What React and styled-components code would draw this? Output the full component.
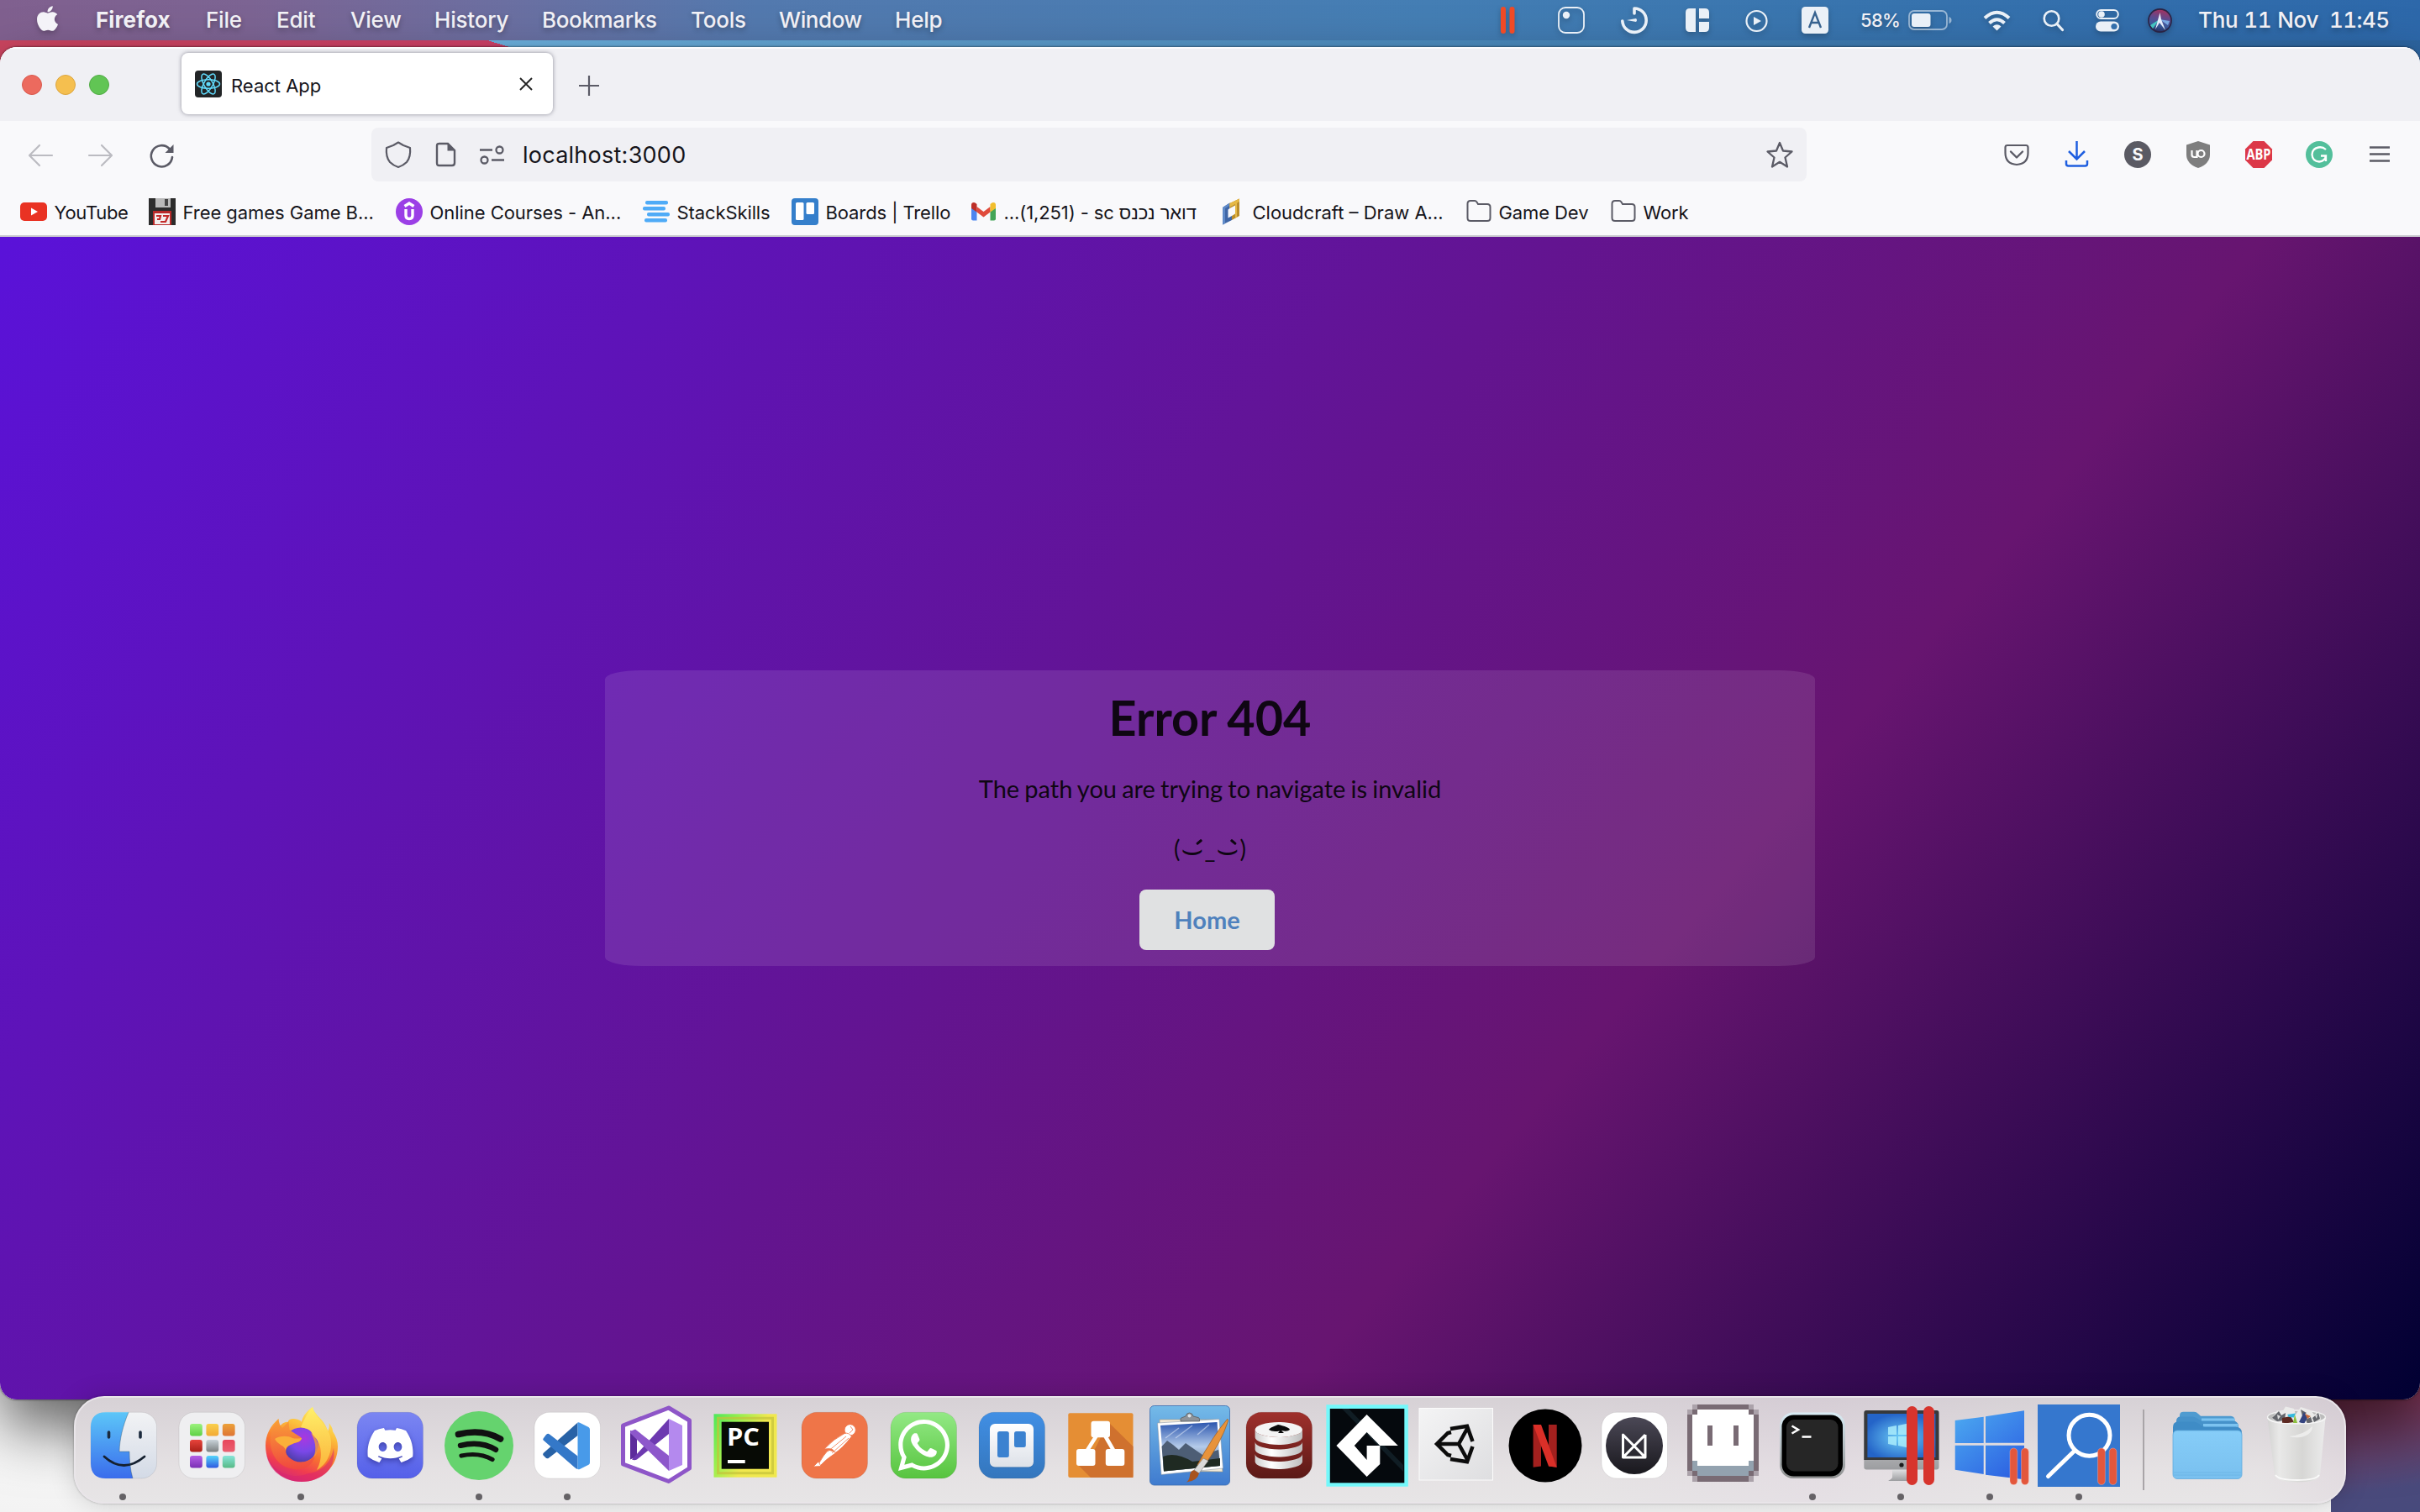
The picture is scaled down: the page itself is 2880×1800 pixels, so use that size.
import React from "react";
import styled, { createGlobalStyle } from "styled-components";
import { FaApple, FaDiscord, FaWhatsapp } from "react-icons/fa";

const GlobalStyle = createGlobalStyle`
  *, *::before, *::after { box-sizing: border-box; }
  html, body { margin: 0; padding: 0; }
  body { width: 2880px; height: 1800px; overflow: hidden; }
  svg { display: block; flex: none; overflow: visible; }
`;

const ui = `"Inter", "Liberation Sans", "DejaVu Sans", sans-serif`;
const lato = `"Lato", "DejaVu Sans", sans-serif`;

/* ---------- desktop ---------- */

const Desktop = styled.div`
  display: flex;
  flex-direction: column;
  width: 2880px;
  height: 1800px;
  overflow: hidden;
  font-family: ${ui};
  background:
    linear-gradient(#fbfbfb, #f3f3f3) 0 1640px / 2774px 160px no-repeat,
    linear-gradient(172deg, #9c3a55 0%, #85375a 35%, #4a4a7c 85%, #474a7c 100%) 2774px 1600px / 106px 200px no-repeat,
    linear-gradient(90deg, #cb4560, #cf4068) 0 40px / 580px 40px no-repeat,
    linear-gradient(to top right, #cf4068 50%, transparent 50.5%) 580px 48px / 26px 8px no-repeat,
    linear-gradient(90deg, #6cb2e0 0, #6cb2e0 600px, #62a3d2 1000px, #4787bb 1900px, #2c649f 2880px) 0 40px / 2880px 400px no-repeat,
    #3a75b0;
`;

const MenuBar = styled.header`
  display: flex;
  align-items: center;
  flex: none;
  height: 48px;
  padding-left: 42px;
  margin-bottom: 8px;
  color: #f4f3f8;
  background: linear-gradient(90deg, #80608f 0, #7c6493 300px, #6b6fa1 600px, #5379ae 900px, #447eb4 1700px, #3874ae 2200px, #2d68aa 2880px);
`;

const MenuText = styled.span`
  width: ${(p) => p.$w}px;
  font-size: ${(p) => p.$size ?? 26}px;
  line-height: 32px;
  font-weight: ${(p) => (p.$bold ? 700 : 500)};
  font-variant-numeric: ${(p) => (p.$tabular ? "tabular-nums" : "normal")};
  letter-spacing: ${(p) => p.$ls ?? -0.2}px;
  white-space: pre;
  text-shadow: 0 3px 6px rgba(0, 0, 0, 0.3);
`;

const StatusSlot = styled.div`
  display: flex;
  align-items: center;
  width: ${(p) => p.$w}px;
  height: 48px;
  filter: drop-shadow(0 3px 3px rgba(0, 0, 0, 0.22));
`;

const StatusArea = styled.div`
  display: flex;
  align-items: center;
  margin-left: auto;
`;

/* ---------- browser window ---------- */

const Browser = styled.main`
  display: flex;
  flex-direction: column;
  flex: none;
  width: 2880px;
  height: 1610px;
  border-radius: 20px;
  overflow: hidden;
  background: #f9f9fb;
`;

const BrowserShadow = styled.div`
  flex: none;
  height: 1610px;
  border-radius: 20px;
  box-shadow: 0 0 2px 1px rgba(0, 0, 0, 0.35), 0 34px 70px rgba(0, 0, 0, 0.6);
`;

const TabStrip = styled.div`
  display: flex;
  align-items: center;
  flex: none;
  height: 88px;
  padding-left: 26px;
  background: #f0f0f4;
  border-top: 2px solid #fbfbfd;
`;

const Lights = styled.div`
  display: flex;
  gap: 16px;
  width: 190px;
`;

const Light = styled.span`
  width: 24px;
  height: 24px;
  border-radius: 50%;
  background: ${(p) => p.$c};
  border: 1px solid ${(p) => p.$b};
`;

const Tab = styled.div`
  display: flex;
  align-items: center;
  width: 442px;
  height: 73px;
  margin-bottom: 3px;
  padding: 0 23px 0 16px;
  border-radius: 8px;
  background: #fff;
  box-shadow: 0 0 5px rgba(60, 60, 80, 0.55);
`;

const TabTitle = styled.span`
  flex: 1;
  padding: 4px 0 0 11px;
  font-size: 22px;
  line-height: 28px;
  letter-spacing: 0;
  color: #15141a;
`;

const NewTab = styled.div`
  display: flex;
  margin: 2px 0 0 31px;
`;

const NavBar = styled.div`
  display: flex;
  align-items: center;
  flex: none;
  height: 80px;
  padding: 0 32px;
`;

const NavButtons = styled.div`
  display: flex;
  align-items: center;
  gap: 40px;
  width: 410px;
`;

const UrlBar = styled.div`
  display: flex;
  align-items: center;
  width: 1708px;
  height: 64px;
  padding: 0 16px;
  border-radius: 8px;
  background: #f0f0f4;
`;

const Url = styled.span`
  flex: 1;
  padding: 2px 0 0 22px;
  font-size: 27px;
  line-height: 34px;
  letter-spacing: 0.25px;
  color: #15141a;
`;

const UrlIcon = styled.span`
  display: flex;
  width: ${(p) => p.$w}px;
`;

const Extensions = styled.div`
  display: flex;
  align-items: center;
  gap: 40px;
  margin-left: auto;
`;

const Bookmarks = styled.nav`
  display: flex;
  align-items: flex-start;
  flex: none;
  height: 58px;
  padding: 12px 0 0 24px;
  border-bottom: 2px solid #c9c9cf;
`;

const Bookmark = styled.div`
  display: flex;
  align-items: center;
  width: ${(p) => p.$w}px;
  height: 32px;
  gap: 8.5px;
  font-size: 22px;
  line-height: 30px;
  letter-spacing: ${(p) => p.$ls}px;
  white-space: nowrap;
  color: #15141a;

  span { padding-top: 2px; }
`;

/* ---------- page ---------- */

const Page = styled.section`
  display: flex;
  justify-content: center;
  align-items: center;
  flex: 1;
  background: linear-gradient(130deg, #5a12d9 0%, #671570 66.7%, #000032 100%);
`;

const Card = styled.article`
  display: flex;
  flex-direction: column;
  align-items: center;
  width: 1440px;
  height: 352px;
  border-radius: 3%;
  background: rgba(255, 255, 255, 0.1);
  font-family: ${lato};
  color: #0f0613;
`;

const Title = styled.h1`
  margin: 20px 0 0;
  font-size: 57.5px;
  line-height: 72px;
  font-weight: 700;
  word-spacing: -1px;
`;

const Message = styled.p`
  margin: 29px 0 0;
  font-size: 29px;
  line-height: 40px;
  word-spacing: -1.25px;
`;

const Face = styled.p`
  display: flex;
  justify-content: center;
  margin: 31px 0 0;
  font-size: 28px;
  line-height: 40px;
`;

const Eye = styled.span`
  position: relative;
  display: flex;
  justify-content: center;
  width: 29px;
  font: 42px/40px "DejaVu Sans", sans-serif;
  transform: translateY(1px);

  &::after {
    content: "";
    position: absolute;
    top: 10px;
    left: 18px;
    width: 8px;
    height: 2.5px;
    border-radius: 1px;
    background: currentColor;
    transform: rotate(${(p) => p.$tilt}deg);
  }
`;

const Mouth = styled.span`
  padding-top: 1px;
`;

const HomeButton = styled.button`
  margin: 28px 7px 0 0;
  width: 161px;
  height: 72px;
  border: 0;
  border-radius: 8px;
  background: #e0e1e2;
  color: #4f81bd;
  font: 700 29px/28px ${lato};
`;

/* ---------- dock ---------- */

const DockBar = styled.footer`
  position: relative;
  display: flex;
  flex: none;
  width: 2704px;
  height: 128px;
  margin: -4px 0 0 88px;
  padding: 4px 0 0 3.6px;
  border: 2px solid #e9e5e9;
  border-radius: 36px;
  background:
    linear-gradient(180deg, rgba(214, 208, 213, 0.9), rgba(230, 226, 228, 0.9) 70%, rgba(232, 230, 231, 0.9)),
    linear-gradient(90deg, #dcdcdc 0 1800px, #c9a9cf 2060px, #dcdcdc 2300px, #e0e0e0 2600px, #b993b5 2704px);
  box-shadow: 0 0 2px 1px rgba(0, 0, 0, 0.14), 0 0 30px rgba(0, 0, 0, 0.16);
`;

const DockSlot = styled.div`
  display: flex;
  flex-direction: column;
  align-items: center;
  width: 105.8px;
`;

const RunningDot = styled.i`
  width: 8px;
  height: 8px;
  border-radius: 50%;
  background: #656266;
`;

const Divider = styled.div`
  width: 2px;
  height: 96px;
  margin: 10px 22px 0 23px;
  background: #a9a5a8;
`;

/* ---------- dock artwork (each on a 106 x 110 board) ---------- */

const Tile = ({ fill }) => <rect x="14" y="13.3" width="78.5" height="78.7" rx="18" fill={fill} stroke="rgba(0,0,0,.08)" />;

const Grad = ({ id, from, to, x2 = 0, y2 = 1 }) => (
  <linearGradient id={id} x1="0" y1="0" x2={x2} y2={y2}>
    <stop offset="0" stopColor={from} />
    <stop offset="1" stopColor={to} />
  </linearGradient>
);

const Finder = () => (
  <>
    <Grad id="fi" from="#5cc6f8" to="#3a6cec" />
    <Grad id="fj" from="#f2f3f5" to="#d3dae6" />
    <Tile fill="url(#fj)" />
    <path d="M32 13.3H59C52 30 48.5 45 48 60H60C60 70 61 82 64 92H32Q14 92 14 74V31Q14 13.3 32 13.3Z" fill="url(#fi)" />
    <path d="M35.5 37V43M73 37V43" stroke="#1b2a3d" strokeWidth="3.6" strokeLinecap="round" />
    <path d="M30 66Q53 87 78 66" fill="none" stroke="#15202f" strokeWidth="2.8" strokeLinecap="round" />
    <path d="M59 13.3C52 30 48.5 45 48 60H60C60 70 61 82 64 92" fill="none" stroke="#356" strokeWidth=".8" opacity=".5" />
  </>
);

const cells = [
  ["#9cf27e", "#5fd045"], ["#f9d04e", "#f2a934"], ["#eca13a", "#de7434"],
  ["#e8443c", "#a81f17"], ["#c9d3d9", "#7a7f80"], ["#e8465c", "#ea5f70"],
  ["#b45fe6", "#7a2fb4"], ["#55d5fb", "#2e58e0"], ["#86e5d9", "#57b985"],
];
const Launchpad = () => (
  <>
    <Tile fill="#efeff1" />
    {cells.map(([a, b], i) => (
      <React.Fragment key={a}>
        <Grad id={`lp${i}`} from={a} to={b} />
        <rect x={27 + (i % 3) * 19.4} y={27 + Math.floor(i / 3) * 19} width="14.8" height="14.6" rx="3" fill={`url(#lp${i})`} />
      </React.Fragment>
    ))}
  </>
);

const Firefox = () => (
  <>
    <linearGradient id="fx" x1=".75" y1="0" x2=".35" y2="1">
      <stop offset="0" stopColor="#fff36b" />
      <stop offset=".3" stopColor="#fcc03c" />
      <stop offset=".6" stopColor="#f8752f" />
      <stop offset=".82" stopColor="#f03c4f" />
      <stop offset="1" stopColor="#d22a78" />
    </linearGradient>
    <radialGradient id="fg" cx=".6" cy=".3" r=".8">
      <stop offset="0" stopColor="#a838e0" />
      <stop offset=".5" stopColor="#7a48e8" />
      <stop offset="1" stopColor="#433b9b" />
    </radialGradient>
    <Grad id="fh" from="#f9a136" to="#f0473f" />
    <Grad id="fk" from="#fff06a" to="#fbb33a" />
    <path d="M26.5 21C25 26 26 29 27 31C31 26 35 24 38 25C37 18 60 20 54 31C52 20 60 12 67 7C69 17 82 22 85 36C87 33 87 29 86.6 26C90 31 91 33 91 36C95 42 97 48 97 54C97 78 78 96 54 96C30 96 11 78 11 53C11 40 17 29 26.5 21Z" fill="url(#fx)" />
    <path d="M12 62C18 86 44 94 62 86C80 84 90 70 92 56C96 84 74 96 54 96C32 96 14 82 12 62Z" fill="#d8256f" opacity=".55" />
    <circle cx="53" cy="52" r="20.5" fill="url(#fg)" />
    <path d="M53 31C58 20 62 12 67 7C69 19 84 26 88 42C92 60 84 76 72 82C80 68 78 48 68 42C66 38 66 33 53 31Z" fill="url(#fk)" />
    <path d="M65 38C74 44 78 60 66 70C72 62 72 50 65 38Z" fill="#f9963a" opacity=".8" />
    <path d="M26.5 21C27 26 28 29 31 32L38.5 24L39.5 34C44 38 48 39 54 44C53 49 47 49 43 51C36 53 34 58 36 64C38 71 45 74 53 73C59 73 66 70 70 65C66 80 52 84 40 80C24 76 15 60 17 42C18 34 21 27 26.5 21Z" fill="url(#fh)" />
    <path d="M22 45C28 41 38 41 43 44Q48 45 54 44C53 49 47 49 43 51C38 53 35 55 35 59C34 52 26 53 22 45Z" fill="#fbb03a" />
  </>
);

const Discord = () => (
  <>
    <Grad id="dc" from="#7b86f2" to="#5560e9" />
    <Tile fill="url(#dc)" />
    <g style={{ filter: "drop-shadow(0 3px 3px rgba(40,40,140,.6))" }}>
      <FaDiscord x="24" y="29" width="59" height="47" color="#fff" style={{ width: 59, height: 47 }} />
    </g>
  </>
);

const Spotify = () => (
  <g>
    <circle cx="53" cy="53" r="41" fill="#65d36e" />
    <g fill="none" stroke="#111" strokeLinecap="round">
      <path d="M28.5 39.5Q57 32.5 78.5 45" strokeWidth="7.6" />
      <path d="M31 52.8Q55 47 73 57.8" strokeWidth="6.4" />
      <path d="M32 65Q53 60.5 69 69.5" strokeWidth="5.2" />
    </g>
  </g>
);

const VSCode = () => (
  <>
    <Tile fill="#fff" />
    <path d="M24.6 62L65.5 25.5V41L31 67.7Q29 69 27 67L24.6 64.5Q23.6 63 24.6 62Z" fill="#2862a6" />
    <path d="M24.6 44.5L27.5 40.5Q29.5 37.8 32 39.5L65.5 65.5V81Q64 81 62 79L24.6 46.5Q23.8 45.5 24.6 44.5Z" fill="#3478c8" />
    <path d="M65.5 25.5Q66.5 25 68 25.8L78.5 31Q80 32 80 34V73Q80 75 78.5 75.8L68 81Q66.5 81.5 65.5 81Z" fill="#489ae9" />
  </>
);

const VisualStudio = () => (
  <g>
    <path d="M67.8 8L92.5 23V80L67.8 95.5L13.5 75V29Z" fill="#fff" stroke="#8e56c8" strokeWidth="5" strokeLinejoin="round" />
    <path d="M22 35L30 38V66L22 69.5Z" fill="#5d2c9c" />
    <path d="M24 69.5L68 21V39L30 69.5Q27 71 24 69.5Z" fill="#6d39b0" />
    <path d="M22 36L28 33.5L68 65V83L22 38Z" fill="#8d57cb" />
    <path d="M68 21L84 29V76L68 83Z" fill="#b489ee" />
  </g>
);

const PyCharm = () => (
  <>
    <linearGradient id="pc" x1="0" y1="0" x2="1" y2=".5">
      <stop offset="0" stopColor="#4be85a" />
      <stop offset=".35" stopColor="#9af04e" />
      <stop offset=".7" stopColor="#f0e84e" />
    </linearGradient>
    <rect x="15.5" y="15.3" width="75" height="75.4" fill="url(#pc)" />
    <rect x="20.5" y="20.3" width="65" height="65.4" fill="none" stroke="#c3c23a" strokeWidth="3" opacity=".7" />
    <rect x="24.7" y="24.7" width="56.3" height="56" fill="#070a05" />
    <text x="31" y="53" fontFamily="Open Sans, sans-serif" fontWeight="700" fontSize="28.5" textLength="39" lengthAdjust="spacingAndGlyphs" fill="#fff">PC</text>
    <rect x="32" y="70" width="20.7" height="4" fill="#fff" />
  </>
);

const Postman = () => (
  <>
    <Tile fill="#ef7548" />
    <g fill="#fff" stroke="#ef7548" strokeWidth=".8">
      <circle cx="71.7" cy="34.3" r="6.6" />
      <path d="M72 30L75 34L71 38" fill="none" />
      <path d="M65 38.5Q70 37 73.5 42Q62 57 52 63Q55 55 41 57Q52 45 65 38.5Z" />
      <path d="M52 60Q55 60 54 62Q42 70 36 77L34 75Q40 64 46 58Z" />
      <path d="M34 72L37 77.5L28 78Z" />
      <path d="M67 42L45 60M70 44L50 62" fill="none" />
    </g>
  </>
);

const WhatsApp = () => (
  <>
    <Grad id="wa" from="#93e985" to="#57c43f" />
    <Tile fill="url(#wa)" />
    <FaWhatsapp x="23" y="17.5" color="#fff" style={{ width: 61, height: 70 }} width="61" height="70" />
  </>
);

const Trello = () => (
  <>
    <Grad id="tr" from="#418fe4" to="#3476bd" />
    <Grad id="ts" from="#ffffff" to="#dde1e8" />
    <Tile fill="url(#tr)" />
    <rect x="27" y="27.5" width="52" height="52" rx="6" fill="#1d4f8a" opacity=".35" />
    <rect x="27" y="27" width="52" height="51.5" rx="6" fill="url(#ts)" />
    <rect x="36" y="36" width="13.8" height="31" rx="2.5" fill="#3b82d0" />
    <rect x="56" y="36" width="13.8" height="19" rx="2.5" fill="#3b82d0" />
  </>
);

const DrawIo = () => (
  <>
    <rect x="14.3" y="14.3" width="77.2" height="76.7" rx="2" fill="#e58e34" />
    <path d="M62 25L91.5 54V91H41L26 76L46 57L53 43Z" fill="#cf712e" />
    <path d="M48 41L36 60M58 41L69 60" stroke="#fff" strokeWidth="4.5" />
    <rect x="41.5" y="23.7" width="22.5" height="19.5" rx="3" fill="#fff" />
    <rect x="24" y="57" width="22.5" height="20" rx="3" fill="#fff" />
    <rect x="58.8" y="57" width="22.5" height="20" rx="3" fill="#fff" />
  </>
);

const PhotoEditor = () => (
  <>
    <Grad id="pe" from="#74bae8" to="#3f7bcf" />
    <linearGradient id="ps" x1="0" y1="0" x2="0" y2="1">
      <stop offset="0" stopColor="#2b55ae" />
      <stop offset=".5" stopColor="#b4cbea" />
      <stop offset="1" stopColor="#5d6f80" />
    </linearGradient>
    <rect x="5.5" y="5.5" width="95" height="94.5" rx="5" fill="url(#pe)" stroke="#3a6cb0" strokeWidth=".8" />
    <path d="M17 22H87L92 84L19 83Z" fill="#f3ead8" stroke="#a89878" strokeWidth=".6" />
    <path d="M14.5 26L88 21.5L92.5 80L19 87.5Z" fill="#fff" stroke="#8d99a8" strokeWidth=".6" />
    <path d="M18 29L85.5 25L89 77L22 83.5Z" fill="url(#ps)" />
    <path d="M19.5 54L26 47L33 52L40 58L48 50L58 57L68 64L87 58L89 77L22 83.5Z" fill="#4d5e75" />
    <path d="M21 66Q36 60 56 72L89 68V77L22 83.5Z" fill="#1f2a22" />
    <path d="M24 44L40 32M36 44L56 29M62 40L76 28" stroke="#e9f1fc" strokeWidth="1.4" opacity=".5" />
    <path d="M42 24V21Q42 20 44 19.5L48 18Q49 14 52.5 14Q56 14 57 18L63 19.5Q64.5 20 64.5 21.5V24Z" fill="#8d9299" stroke="#555" strokeWidth=".7" />
    <circle cx="52.5" cy="17.5" r="2" fill="#dfe5ea" />
    <path d="M97.5 21.5Q99 21 98.5 24Q90 50 68 80L62 76Q80 42 97.5 21.5Z" fill="#e8933a" stroke="#9c5a1c" strokeWidth=".7" />
    <path d="M69 68L75 71L64 86L58 82Z" fill="#d9d9d9" stroke="#777" strokeWidth=".6" />
    <path d="M58 82L64 86Q62 95 49 96.5Q53 93 53 88Q54 83 58 82Z" fill="#a8541f" />
  </>
);

const Database = () => (
  <>
    <Grad id="db" from="#9f302c" to="#5b1916" />
    <linearGradient id="dd" x1="0" y1="0" x2="1" y2="0">
      <stop offset="0" stopColor="#cfcfcf" />
      <stop offset=".35" stopColor="#ffffff" />
      <stop offset="1" stopColor="#bdbdbd" />
    </linearGradient>
    <Tile fill="url(#db)" />
    {[29, 14.5, 0].map((dy) => (
      <path key={dy} d={`M24.6 ${34 + dy}V${43 + dy}A28.2 9 0 0 0 81 ${43 + dy}V${34 + dy}A28.2 9 0 0 1 24.6 ${34 + dy}Z`} fill="url(#dd)" />
    ))}
    <ellipse cx="52.8" cy="34" rx="28.2" ry="9" fill="#f4f4f4" />
    <path d="M52 28Q66 31 66 34Q63 37 56 35L59 38H52L54 35.5Q45 37 41 34Q41 32 52 28Z" fill="#0a0a0a" />
  </>
);

const GameMaker = () => (
  <>
    <rect x="3.4" y="4.3" width="97.4" height="97.4" fill="#74f8fb" />
    <rect x="7.8" y="9" width="88.5" height="88.3" fill="#05090d" />
    <path d="M22 9L95 84V76L30 9Z" fill="#101d24" />
    <path d="M51.6 16L88.8 53H67.3L51.6 37L36.8 53L51.6 70V53H67.3V75L51.6 90L15.4 53Z" fill="#fff" />
  </>
);

const Unity = () => (
  <>
    <Grad id="un" from="#f4f4f5" to="#dedee0" x2={1} />
    <rect x="9" y="8.5" width="87.5" height="85.5" fill="url(#un)" stroke="#fbfbfb" />
    <g fill="none" stroke="#0c0c0c" strokeWidth="4.5">
      <path d="M46 33L66 29.8L72.5 48M46 69L66 72.2L72.5 54M56 51H31M56 51L67 31M56 51L67 71" />
      <path d="M47 37L43 38L30 51L43 64L47 65" />
    </g>
  </>
);

const Netflix = () => (
  <>
    <circle cx="53" cy="53" r="43.5" fill="#000" />
    <path d="M38.6 28H48V77.6L38.6 78.7ZM57 28H66.7V78.7L57 77.6Z" fill="#a3201e" />
    <path d="M38.6 28H48L66.7 78.7L57 77.6Z" fill="#db2f28" />
  </>
);

const Monogram = () => (
  <>
    <Grad id="mg" from="#4b4856" to="#19181d" />
    <Tile fill="#fff" />
    <circle cx="53" cy="53" r="34" fill="url(#mg)" />
    <path d="M39.5 67V40L66 67M66 40L39.5 67H66V40" fill="none" stroke="#fff" strokeWidth="3" strokeLinejoin="round" />
  </>
);

const Aseprite = () => (
  <g shapeRendering="crispEdges">
    <path d="M16 4H89V10H95V89H89V96H16V89H10V10H16Z" fill="#aba2aa" />
    <path d="M22 4H83V10H89V16H95V83H89V89H83V96H22V89H16V83H10V16H16V10H22Z" fill="#796b74" />
    <path d="M22 10H83V16H89V77H16V16H22Z" fill="#fff" />
    <path d="M16 71H22V77H83V71H89V83H83V89H22V83H16Z" fill="#93a2af" />
    <path d="M34 29H40V53H34ZM65 29H71V53H65Z" fill="#796b74" />
  </g>
);

const Terminal = () => (
  <>
    <Grad id="te" from="#d9ecf5" to="#8f9090" />
    <rect x="14" y="13.5" width="78" height="78.5" rx="16" fill="url(#te)" />
    <rect x="16.5" y="16.5" width="72.5" height="73" rx="14" fill="#000" />
    <rect x="22" y="22" width="61.5" height="61.5" rx="9" fill="#262626" />
    <path d="M28.5 29.5L36 34L28.5 38.5" fill="none" stroke="#fff" strokeWidth="2.6" />
    <path d="M40.5 42.5H51.5" stroke="#fff" strokeWidth="2.6" />
  </>
);

const ParallelsBars = ({ x1 = 76, x2 = 90, fill = "#e3573c" }) => (
  <g fill={fill} stroke="rgba(255,190,180,.45)" strokeWidth=".8">
    <rect x={x1} y="56" width="8.8" height="43.5" rx="4.4" />
    <rect x={x2} y="56" width="8.8" height="43.5" rx="4.4" />
  </g>
);

const VirtualMac = () => (
  <>
    <radialGradient id="vr" cx=".5" cy=".55" r=".55">
      <stop offset="0" stopColor="#6fd0f8" />
      <stop offset="1" stopColor="#2464c8" />
    </radialGradient>
    <Grad id="vs" from="#e2e2e4" to="#9c9da0" />
    <path d="M43 81H63L64 91Q66 94 68 95H38Q42 93 43 91Z" fill="url(#vs)" />
    <rect x="9.3" y="11" width="89.2" height="70.5" rx="3" fill="url(#vs)" />
    <path d="M12 11H96Q98.5 11 98.5 14V70H9.3V14Q9.3 11 12 11Z" fill="#37393c" />
    <rect x="13.4" y="15" width="81" height="52" fill="url(#vr)" />
    <path d="M38 31L48 29V40H38ZM50 29L64 26V40H50ZM38 42H48V53L38 51ZM50 42H64V56L50 53Z" fill="#a9ecfb" opacity=".85" />
    <circle cx="54" cy="76" r="2.6" fill="#1c1c1c" />
    <g fill="#d7342d">
      <rect x="60" y="6" width="13" height="94" rx="6.5" />
      <rect x="80" y="6" width="13" height="94" rx="6.5" />
    </g>
  </>
);

const Windows = () => (
  <>
    <linearGradient id="wi" gradientUnits="userSpaceOnUse" x1="20" y1="15" x2="80" y2="90">
      <stop offset="0" stopColor="#4aa5f0" />
      <stop offset="1" stopColor="#2d62e2" />
    </linearGradient>
    <path d="M11.7 23L45.7 18.7V50H11.7ZM48 18.2L94 11.3V49.7H48ZM11.7 52.7H45.7V87L11.7 81.7ZM48 52.7H94V93.3L48 87.7Z" fill="url(#wi)" />
    <ParallelsBars x1={77} x2={90.5} />
  </>
);

const SearchApp = () => (
  <>
    <rect x="4" y="4" width="98" height="98" fill="#3577ce" />
    <circle cx="65.5" cy="40.7" r="24.5" fill="none" stroke="#fff" strokeWidth="5" />
    <path d="M48 59L16.5 89.5" stroke="#fff" strokeWidth="5" strokeLinecap="round" />
    <ParallelsBars x1={75.5} x2={89.2} />
  </>
);

const Folders = () => (
  <>
    <Grad id="fo" from="#86cdf8" to="#79c0ef" />
    <path d="M20 36V17Q20 12.7 24.5 12.7H37Q40 12.7 42 15L45 17.7H81Q85 18 85.5 22V36Z" fill="#4f9bd0" />
    <path d="M46 20.5H85.5V28H46Z" fill="#7cc3f0" />
    <path d="M16 40V24Q16 18.5 21 18.5H36Q40 19 43 22L46 23.5H84Q89 24 90 29V40Z" fill="#4692ca" />
    <path d="M48 27H89.5V34H48Z" fill="#7cc3f0" />
    <path d="M12 60V31Q12 24.5 18 24.5H36Q40 24.5 43 27Q46 30.5 50 30.5H87Q94 31 94 38V60Z" fill="#3f8cc6" />
    <rect x="12" y="35" width="82" height="57.5" rx="5" fill="url(#fo)" stroke="#62abdd" strokeWidth=".8" />
    <path d="M13 85H93M13 88H93" stroke="#6cb4e4" strokeWidth=".9" />
  </>
);

const Trash = () => (
  <>
    <linearGradient id="ta" x1="0" y1="0" x2="1" y2="0">
      <stop offset="0" stopColor="#d2d2d1" />
      <stop offset=".2" stopColor="#e9e9e8" />
      <stop offset=".6" stopColor="#d6d6d4" />
      <stop offset="1" stopColor="#ececec" />
    </linearGradient>
    <ellipse cx="53" cy="19" rx="34.5" ry="8" fill="#bcbcbc" stroke="#f2f2f2" strokeWidth="1.4" />
    <path d="M24 21L30 11L36 13L40 6.5L50 9L52 16L58 7L70 11L74 16L80 12L82 22L66 27H38Z" fill="#ebebea" />
    <path d="M24 20L32 12L35 17L40 14L39 23L30 24ZM58 10L65 14L60 18ZM72 20L79 14L81 21L74 25ZM64 22L70 19L72 25L66 27Z" fill="#63656b" />
    <path d="M30 16L34 18L31 22ZM75 17L78 16L77 21Z" fill="#dedede" />
    <path d="M36 20L46 18L50 25L36 27Z" fill="#5d2a22" />
    <path d="M42 16L52 14.5L50 19.5L44 19Z" fill="#35b8dd" />
    <path d="M51 16L54 26L49 26Z" fill="#8cbf3d" />
    <path d="M56 25L62 13L66 20L62 27Z" fill="#34447f" />
    <path d="M63 15L70 18L66 21Z" fill="#c96a38" />
    <path d="M18.5 20Q21 27 53 27Q85 27 87.5 20L81 88Q79 96.5 54 96.5Q29 96.5 27 88Z" fill="url(#ta)" opacity=".96" />
    <path d="M44 42Q62 40 72 30Q72 40 58 43Q50 44 44 42Z" fill="#f1f1f0" opacity=".8" />
    <path d="M28 88Q32 94 54 94Q76 94 80 88" fill="none" stroke="#fff" strokeWidth="2" opacity=".8" />
    <path d="M18.5 20Q21 27 53 27Q85 27 87.5 20" fill="none" stroke="#f7f7f7" strokeWidth="1.2" />
  </>
);

const apps = [
  [Finder, 1], [Launchpad], [Firefox, 1], [Discord], [Spotify, 1], [VSCode, 1], [VisualStudio], [PyCharm],
  [Postman], [WhatsApp], [Trello], [DrawIo], [PhotoEditor], [Database], [GameMaker], [Unity], [Netflix],
  [Monogram], [Aseprite], [Terminal, 1], [VirtualMac, 1], [Windows, 1], [SearchApp, 1],
];

const DockItem = ({ art: Art, running }) => (
  <DockSlot>
    <svg width="106" height="110" viewBox="0 0 106 110"><Art /></svg>
    {running ? <RunningDot /> : null}
  </DockSlot>
);

/* ---------- small icons ---------- */

const Glyph = ({ w = 32, h = 32, children, ...rest }) => (
  <svg width={w} height={h} viewBox={`0 0 ${w} ${h}`} fill="none" {...rest}>{children}</svg>
);

const white = "#eaf0f7";

const StatusIcons = () => (
  <StatusArea>
    <StatusSlot $w={68}><Glyph w={17} fill="#f04a25"><rect width="6" height="32" rx="3" /><rect x="10.5" width="6" height="32" rx="3" /></Glyph></StatusSlot>
    <StatusSlot $w={75}><Glyph><rect x="1" y="1" width="30" height="30" rx="8" stroke={white} strokeWidth="1.8" /><circle cx="10" cy="10" r="4.2" fill={white} /></Glyph></StatusSlot>
    <StatusSlot $w={77}><Glyph>
      <path d="M16 8V2A14.2 14.2 0 1 1 1.8 17" stroke={white} strokeWidth="3.6" strokeLinejoin="round" strokeLinecap="round" />
      <path d="M7 16L18 14Q20 16 18 18Z" fill={white} />
    </Glyph></StatusSlot>
    <StatusSlot $w={71}><Glyph w={28} h={28} fill={white}><path d="M5 0H12V28H5Q0 28 0 23V5Q0 0 5 0ZM16 0H23Q28 0 28 5V12H16ZM16 16H28V23Q28 28 23 28H16Z" /></Glyph></StatusSlot>
    <StatusSlot $w={67}><Glyph w={27} h={27}><circle cx="13.5" cy="14" r="12" stroke={white} strokeWidth="2.2" /><path d="M10 9L19 14L10 19Z" fill={white} /></Glyph></StatusSlot>
    <StatusSlot $w={70}><Glyph>
      <rect width="32" height="32" rx="4.5" fill={white} />
      <path d="M9 25L16 7L23 25M11.5 19H20.5" stroke="#37628f" strokeWidth="2.4" />
    </Glyph></StatusSlot>
    <MenuText $w={57} $ls={-0.7} $size={22}>58%</MenuText>
    <StatusSlot $w={89}><Glyph w={52} h={24}>
      <rect x="1" y="1" width="45" height="22" rx="6" stroke={white} strokeOpacity=".55" strokeWidth="1.8" />
      <rect x="4" y="4" width="22.5" height="16" rx="3" fill={white} />
      <path d="M48.5 8Q51.5 9 51.5 12Q51.5 15 48.5 16Z" fill={white} opacity=".55" />
    </Glyph></StatusSlot>
    <StatusSlot $w={71}><Glyph w={33} h={25}>
      <path d="M2 9.5Q16.5 -4 31 9.5" stroke={white} strokeWidth="4" />
      <path d="M7.5 15.5Q16.5 7 25.5 15.5" stroke={white} strokeWidth="4" />
      <path d="M16.5 24.5L11.5 19.5Q16.5 15 21.5 19.5Z" fill={white} />
    </Glyph></StatusSlot>
    <StatusSlot $w={63}><Glyph w={25} h={26}><circle cx="10.5" cy="11" r="8.8" stroke={white} strokeWidth="2.6" /><path d="M17 17.5L23.5 24.5" stroke={white} strokeWidth="3.2" strokeLinecap="round" /></Glyph></StatusSlot>
    <StatusSlot $w={62}><Glyph w={28} h={28}>
      <rect x="1.2" y="2" width="25.6" height="10" rx="5" stroke={white} strokeWidth="2" /><circle cx="7" cy="7" r="3.8" fill={white} />
      <rect y="15.5" width="28" height="12" rx="6" fill={white} /><circle cx="22" cy="21.5" r="3.6" fill="#346fab" />
    </Glyph></StatusSlot>
    <StatusSlot $w={60}><Glyph w={29} h={29}>
      <linearGradient id="siri" x1=".6" y1="0" x2=".4" y2="1">
        <stop offset="0" stopColor="#a8305c" /><stop offset=".4" stopColor="#5d4a8e" /><stop offset=".7" stopColor="#3a5a9c" /><stop offset="1" stopColor="#232d5c" />
      </linearGradient>
      <circle cx="14.5" cy="14.5" r="13.6" fill="url(#siri)" stroke="#2a2344" strokeWidth="1.6" />
      <path d="M14 13L3 20L6 24Z" fill="#46d8c8" opacity=".85" />
      <path d="M14 13L26 15L24 20Z" fill="#7fb6ee" opacity=".85" />
      <path d="M14.5 5L16 13L21 26L14 17L9 25L12 14Z" fill="#eef6ff" opacity=".95" />
    </Glyph></StatusSlot>
    <MenuText $w={156} $ls={-0.25} $tabular>Thu 11 Nov</MenuText>
    <MenuText $w={108} $ls={-0.55} $tabular>11:45</MenuText>
  </StatusArea>
);

const ink = "#5b5b66";

const FolderIcon = () => (
  <Glyph w={30} h={28} style={{ marginBottom: 2 }}><path d="M5 2H10Q11.5 2 12.5 3.5L14 6H25Q28.5 6 28.5 9.5V22.5Q28.5 26 25 26H5Q1.5 26 1.5 22.5V5.5Q1.5 2 5 2Z" stroke={ink} strokeWidth="2" /></Glyph>
);

const YouTubeIcon = () => <Glyph><rect y="5" width="32" height="22" rx="5" fill="#e93223" /><path d="M13 11.5L21 16L13 20.5Z" fill="#fff" /></Glyph>;
const FloppyIcon = () => (
  <Glyph><rect width="32" height="32" fill="#2c2c2c" /><rect x="8" width="18" height="11" fill="#b9b9b9" /><rect x="19" y="1" width="4" height="8" fill="#444" /><rect x="5" y="15" width="22" height="17" fill="#b82a2a" /><rect x="7" y="18" width="18" height="13" fill="#f3efef" /><path d="M9 21H14L13 25H10M17 21H23L20 28H14" stroke="#c42a2a" strokeWidth="2.2" /></Glyph>
);
const UdemyIcon = () => <Glyph><circle cx="16" cy="16" r="16" fill="#9b3fe6" /><path d="M10.5 9.5L16 6L21.5 9.5M12 13V20.5Q12 24.5 16 24.5Q20 24.5 20 20.5V13" stroke="#fff" strokeWidth="3.4" /></Glyph>;
const StackIcon = () => <Glyph fill="#4fabf7"><rect x="3" y="3" width="27" height="4.5" rx="2" /><rect x="0" y="10" width="27" height="4.5" rx="2" /><rect x="5" y="17" width="27" height="4.5" rx="2" /><rect x="2" y="24" width="27" height="4.5" rx="2" /></Glyph>;
const TrelloIcon = () => <Glyph><rect width="32" height="32" rx="4" fill="#357fcb" /><rect x="5" y="5" width="9.5" height="21" rx="1.5" fill="#fff" /><rect x="17.5" y="5" width="9.5" height="14" rx="1.5" fill="#fff" /></Glyph>;
const GmailIcon = () => (
  <Glyph>
    <path d="M2 8V24.5Q2 26.5 4 26.5H8.5V14Z" fill="#4d86f0" /><path d="M31 8V24.5Q31 26.5 29 26.5H24.5V14Z" fill="#43a557" />
    <path d="M8.5 10L16.5 16L24.5 10V16.5L16.5 22.5L8.5 16.5Z" fill="#e04b3c" />
    <path d="M2 8Q2 5 5 5Q6.5 5 8.5 7V16.5L2 12Z" fill="#bd2f28" /><path d="M31 8Q31 5 28 5Q26.5 5 24.5 7V16.5L31 12Z" fill="#f2be2c" />
  </Glyph>
);
const CloudcraftIcon = () => (
  <Glyph>
    <path d="M5 11L13.5 5.5V12L11.5 13.5V23.5L16 21V26L5 31.5Z" fill="#3f66a6" />
    <path d="M5 11L13.5 5.5V8.5L8 12V30L5 31.5Z" fill="#5f8ac8" />
    <path d="M13.5 6L25 .5V21L16 26V21L20 18.5V8.5L13.5 12Z" fill="#b98c2b" />
    <path d="M13.5 6L25 .5V4L16.5 9L13.5 10.5ZM22 4V22.5L20 23.7V5.5Z" fill="#e6b844" />
  </Glyph>
);

const bookmarks = [
  ["YouTube", YouTubeIcon, 153, -0.3], ["Free games Game B...", FloppyIcon, 294, -0.05], ["Online Courses - An...", UdemyIcon, 294, -0.05],
  ["StackSkills", StackIcon, 177, -0.1], ["Boards | Trello", TrelloIcon, 212, -0.1], ["...(1,251) - sc דואר נכנס", GmailIcon, 296, -0.1],
  ["Cloudcraft – Draw A...", CloudcraftIcon, 295, 0], ["Game Dev", FolderIcon, 172, -0.1], ["Work", FolderIcon, 120, -0.1],
];

export default function App() {
  return (
    <Desktop>
      <GlobalStyle />
      <MenuBar>
        <StatusSlot $w={72}><FaApple color="#f4f3f8" style={{ width: 29, height: 34, marginTop: -4 }} /></StatusSlot>
        <MenuText $w={131} $bold $ls={0.1}>Firefox</MenuText>
        <MenuText $w={84}>File</MenuText>
        <MenuText $w={88}>Edit</MenuText>
        <MenuText $w={100}>View</MenuText>
        <MenuText $w={128}>History</MenuText>
        <MenuText $w={177} $ls={-0.35}>Bookmarks</MenuText>
        <MenuText $w={105}>Tools</MenuText>
        <MenuText $w={138} $ls={-0.4}>Window</MenuText>
        <MenuText $w={80}>Help</MenuText>
        <StatusIcons />
      </MenuBar>

      <BrowserShadow>
        <Browser>
          <TabStrip>
            <Lights>
              <Light $c="#ec6a5e" $b="#d9594e" />
              <Light $c="#f5bf4f" $b="#dca63f" />
              <Light $c="#61c554" $b="#52ab46" />
            </Lights>
            <Tab>
              <Glyph>
                <rect width="32" height="32" rx="4" fill="#222527" />
                <g stroke="#61dafb" strokeWidth="1.5">
                  <ellipse cx="16" cy="16" rx="13.5" ry="5.2" /><ellipse cx="16" cy="16" rx="13.5" ry="5.2" transform="rotate(60 16 16)" /><ellipse cx="16" cy="16" rx="13.5" ry="5.2" transform="rotate(120 16 16)" />
                </g>
                <circle cx="16" cy="16" r="2.6" fill="#61dafb" />
              </Glyph>
              <TabTitle>React App</TabTitle>
              <Glyph w={18} h={18}><path d="M2 2L16 16M16 2L2 16" stroke="#222" strokeWidth="1.9" /></Glyph>
            </Tab>
            <NewTab><Glyph w={24} h={24}><path d="M12 0V24M0 12H24" stroke={ink} strokeWidth="2.2" /></Glyph></NewTab>
          </TabStrip>

          <NavBar>
            <NavButtons>
              <Glyph><path d="M30 17H4M15 5L3 17L15 29" stroke="#bbbbc1" strokeWidth="2.2" strokeLinecap="round" strokeLinejoin="round" /></Glyph>
              <Glyph><path d="M2 17H28M17 5L29 17L17 29" stroke="#bbbbc1" strokeWidth="2.2" strokeLinecap="round" strokeLinejoin="round" /></Glyph>
              <Glyph><path d="M29 19A12.6 12.6 0 1 1 25.5 9" stroke={ink} strokeWidth="2.6" strokeLinecap="round" /><path d="M30.5 4V14H20.5Z" fill={ink} /></Glyph>
            </NavButtons>
            <UrlBar>
              <UrlIcon $w={60}><Glyph><path d="M16 1.5L22 5L30 8Q31 19 26 25Q22 29 16 31Q10 29 6 25Q1 19 2 8L10 5Z" stroke={ink} strokeWidth="2.2" strokeLinejoin="round" /></Glyph></UrlIcon>
              <UrlIcon $w={53}><Glyph w={26} h={30}><path d="M4 2H15L23 10V25Q23 28 20 28H4.5Q2 28 2 25V4.5Q2 2 4.5 2Z" stroke={ink} strokeWidth="2.4" /><path d="M14.5 2V10.5H23Z" fill={ink} /></Glyph></UrlIcon>
              <UrlIcon $w={29}><Glyph w={29} h={24}><path d="M0 6.5H15M14 18.5H29" stroke={ink} strokeWidth="2.6" /><circle cx="23.5" cy="6.5" r="4" stroke={ink} strokeWidth="2.3" /><circle cx="5.5" cy="18.5" r="4" stroke={ink} strokeWidth="2.3" /></Glyph></UrlIcon>
              <Url>localhost:3000</Url>
              <Glyph><path d="M16 2L20 11.5L30.5 12.5L22.5 19.5L25 30.5L16 24.8L7 30.5L9.5 19.5L1.5 12.5L12 11.5Z" stroke={ink} strokeWidth="2.3" strokeLinejoin="round" /></Glyph>
            </UrlBar>
            <Extensions>
              <Glyph><path d="M5 5H27Q29.5 5 29.5 7.5V14Q29.5 27 16 28Q2.5 27 2.5 14V7.5Q2.5 5 5 5Z" stroke={ink} strokeWidth="2.2" /><path d="M9 12.5L16 19.5L23 12.5" stroke={ink} strokeWidth="2.4" strokeLinecap="round" strokeLinejoin="round" /></Glyph>
              <Glyph><path d="M15.5 0V21M6 12L15.5 21.5L25 12M3 23V27Q3 29.5 5.5 29.5H25.5Q28 29.5 28 27V23" stroke="#1f5fe0" strokeWidth="2.5" /></Glyph>
              <Glyph><circle cx="16" cy="16" r="16" fill="#5a5a63" /><text x="16" y="23" textAnchor="middle" fontFamily="Inter, sans-serif" fontWeight="700" fontSize="20" fill="#f9f9fb">S</text></Glyph>
              <Glyph><path d="M16 0L30 4.5V16Q30 27 16 32Q2 27 2 16V4.5Z" fill="#7e7e7e" /><path d="M8.5 11V16.5Q8.5 19 11.5 19H14.5V11" stroke="#fff" strokeWidth="2.2" /><circle cx="19.5" cy="15" r="4" stroke="#fff" strokeWidth="2.2" /></Glyph>
              <Glyph><path d="M9.5 0H22.5L32 9.5V22.5L22.5 32H9.5L0 22.5V9.5Z" fill="#dc3848" /><text x="1.5" y="22" fontFamily="Open Sans, sans-serif" fontWeight="700" fontSize="17" textLength="29" lengthAdjust="spacingAndGlyphs" fill="#fff">ABP</text></Glyph>
              <Glyph><circle cx="16" cy="16" r="16" fill="#53bf9b" /><path d="M24 10Q20 6.5 15 7.5Q7.5 9 7.5 16Q8 24 16 24.5Q23 24 24 17.5H18M24 17V24" stroke="#fff" strokeWidth="2.3" /></Glyph>
              <Glyph w={32}><path d="M4 7.5H28M4 15.5H28M4 23.5H28" stroke={ink} strokeWidth="2.4" /></Glyph>
            </Extensions>
          </NavBar>

          <Bookmarks>
            {bookmarks.map(([label, Icon, w, ls]) => (
              <Bookmark key={label} $w={w} $ls={ls}><Icon /><span>{label}</span></Bookmark>
            ))}
          </Bookmarks>

          <Page>
            <Card>
              <Title>Error 404</Title>
              <Message>The path you are trying to navigate is invalid</Message>
              <Face>(<Eye $tilt={-40}>⌣</Eye><Mouth>_</Mouth><Eye $tilt={40}>⌣</Eye>)</Face>
              <HomeButton>Home</HomeButton>
            </Card>
          </Page>
        </Browser>
      </BrowserShadow>

      <DockBar>
        {apps.map(([art, running], i) => <DockItem key={i} art={art} running={running} />)}
        <Divider />
        <DockItem art={Folders} />
        <DockItem art={Trash} />
      </DockBar>
    </Desktop>
  );
}
